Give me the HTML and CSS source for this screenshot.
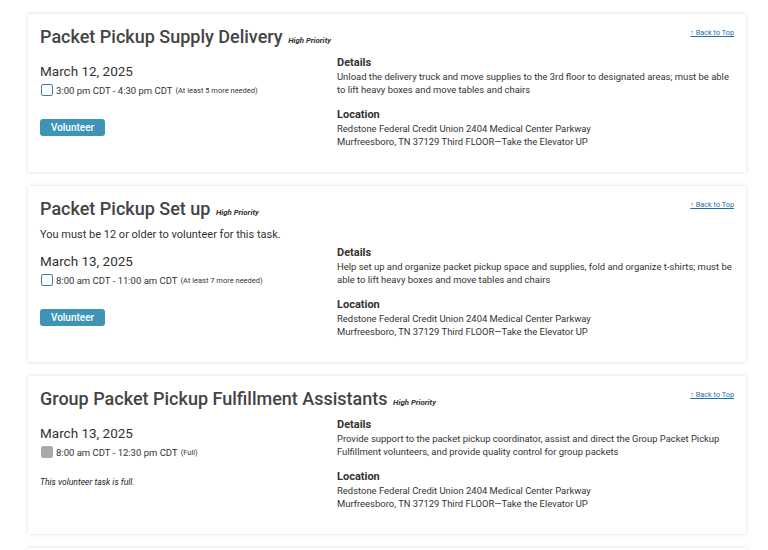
FILE: index.html
```html
<!DOCTYPE html>
<html lang="en">
<head>
  <meta charset="UTF-8">
  <meta name="viewport" content="width=device-width, initial-scale=1.0">
  <title>Volunteer Tasks</title>
  <link rel="stylesheet" href="styles.css">
</head>
<body>
  <main class="tasks">

    <section class="task">
      <div class="task-head">
        <h2>Packet Pickup Supply Delivery <span class="priority">High Priority</span></h2>
        <a href="#" class="top-link">↑ Back to Top</a>
      </div>
      <div class="task-body">
        <div class="shifts">
          <div class="date">March 12, 2025</div>
          <label class="slot"><span class="box"></span>3:00 pm CDT - 4:30 pm CDT <small>(At least 5 more needed)</small></label>
          <button class="volunteer">Volunteer</button>
        </div>
        <div class="info">
          <h3>Details</h3>
          <p>Unload the delivery truck and move supplies to the 3rd floor to designated areas; must be able to lift heavy boxes and move tables and chairs</p>
          <h3>Location</h3>
          <p>Redstone Federal Credit Union 2404 Medical Center Parkway<br>Murfreesboro, TN 37129 Third FLOOR—Take the Elevator UP</p>
        </div>
      </div>
    </section>

    <section class="task">
      <div class="task-head">
        <h2>Packet Pickup Set up <span class="priority">High Priority</span></h2>
        <a href="#" class="top-link">↑ Back to Top</a>
      </div>
      <p class="note">You must be 12 or older to volunteer for this task.</p>
      <div class="task-body">
        <div class="shifts">
          <div class="date">March 13, 2025</div>
          <label class="slot"><span class="box"></span>8:00 am CDT - 11:00 am CDT <small>(At least 7 more needed)</small></label>
          <button class="volunteer">Volunteer</button>
        </div>
        <div class="info">
          <h3>Details</h3>
          <p>Help set up and organize packet pickup space and supplies, fold and organize t-shirts; must be able to lift heavy boxes and move tables and chairs</p>
          <h3>Location</h3>
          <p>Redstone Federal Credit Union 2404 Medical Center Parkway<br>Murfreesboro, TN 37129 Third FLOOR—Take the Elevator UP</p>
        </div>
      </div>
    </section>

    <section class="task">
      <div class="task-head">
        <h2>Group Packet Pickup Fulfillment Assistants <span class="priority">High Priority</span></h2>
        <a href="#" class="top-link">↑ Back to Top</a>
      </div>
      <div class="task-body">
        <div class="shifts">
          <div class="date">March 13, 2025</div>
          <label class="slot full"><span class="box"></span>8:00 am CDT - 12:30 pm CDT <small>(Full)</small></label>
          <p class="full-msg">This volunteer task is full.</p>
        </div>
        <div class="info">
          <h3>Details</h3>
          <p>Provide support to the packet pickup coordinator, assist and direct the Group Packet Pickup Fulfillment volunteers, and provide quality control for group packets</p>
          <h3>Location</h3>
          <p>Redstone Federal Credit Union 2404 Medical Center Parkway<br>Murfreesboro, TN 37129 Third FLOOR—Take the Elevator UP</p>
        </div>
      </div>
    </section>

    <section class="task"></section>

  </main>
</body>
</html>
```

FILE: styles.css
```css
body {
  margin: 0;
  background: #fff;
  font-family: Roboto, "Liberation Sans", sans-serif;
  color: #3a3a3a;
}
.tasks {
  display: flex;
  flex-direction: column;
  gap: 14px;
  padding: 14px 22px 0 28px;
}
.task {
  background: #fff;
  box-shadow: 0 0 4px rgba(0, 0, 0, 0.14);
  padding: 10px 12px 12px 12px;
  min-height: 40px;
}
.task-head {
  display: flex;
  justify-content: space-between;
  align-items: flex-start;
}
.task-head h2 {
  margin: 0;
  font-size: 18px;
  font-weight: 500;
  color: #444;
  line-height: 26px;
}
.priority {
  font-size: 7.8px;
  font-style: italic;
  font-weight: 700;
  color: #333;
  margin-left: 1px;
}
.top-link {
  font-size: 7.3px;
  color: #1f6fa8;
  margin-top: 4px;
}
.note {
  margin: 2px 0 5px;
  font-size: 11px;
  color: #333;
}
.task-body {
  display: grid;
  grid-template-columns: 297px 1fr;
  margin-top: 2px;
}
.date {
  font-size: 13.5px;
  color: #333;
  margin-top: 7px;
}
.slot {
  display: flex;
  align-items: center;
  font-size: 9.5px;
  color: #333;
  margin-top: 5px;
}
.slot small {
  font-size: 7.5px;
  margin-left: 3px;
}
.box {
  width: 10px;
  height: 10px;
  border: 1.3px solid #3f7fa0;
  border-radius: 2px;
  margin: 0 3px 0 1px;
}
.slot.full .box {
  background: #aaa;
  border-color: #aaa;
}
.volunteer {
  display: block;
  margin-top: 23px;
  padding: 0;
  width: 65px;
  height: 17px;
  border: none;
  border-radius: 3px;
  background: #3e94b6;
  color: #fff;
  font-family: Roboto, "Liberation Sans", sans-serif;
  font-size: 10px;
  font-weight: 500;
}
.full-msg {
  margin: 19px 0 0;
  font-size: 8.6px;
  font-style: italic;
  color: #222;
}
.info h3 {
  margin: 0;
  font-size: 11px;
  font-weight: 700;
  color: #333;
  line-height: 13.5px;
}
.info p {
  margin: 0 0 11.5px;
  font-size: 9.45px;
  line-height: 13.5px;
  color: #333;
}
```
